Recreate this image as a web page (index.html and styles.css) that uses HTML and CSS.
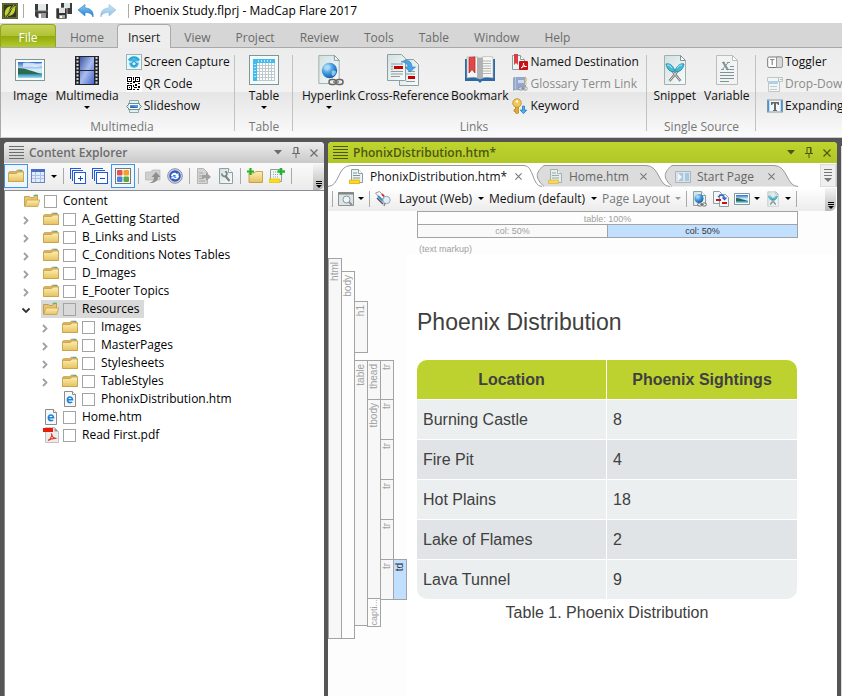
FILE: index.html
```html
<!DOCTYPE html>
<html lang="en">
<head>
<meta charset="utf-8">
<title>Phoenix Study.flprj - MadCap Flare 2017</title>
<link rel="stylesheet" href="styles.css">
</head>
<body>
<svg class="defs" aria-hidden="true">
  <defs>
    <linearGradient id="gFolder" x1="0" y1="0" x2="0" y2="1"><stop offset="0" stop-color="#fdeeb4"/><stop offset="1" stop-color="#e6c25f"/></linearGradient>
    <linearGradient id="gPage" x1="0" y1="0" x2="1" y2="1"><stop offset="0" stop-color="#d3e0e0"/><stop offset="1" stop-color="#fafcfc"/></linearGradient>
    <linearGradient id="gSky" x1="0" y1="0" x2="0" y2="1"><stop offset="0" stop-color="#2b6fd0"/><stop offset=".5" stop-color="#d9f0fa"/><stop offset=".7" stop-color="#bfe6f4"/><stop offset=".75" stop-color="#2a8aac"/><stop offset="1" stop-color="#9fdcf0"/></linearGradient>
    <linearGradient id="gFilm" x1="0" y1="0" x2="1" y2="1"><stop offset="0" stop-color="#3b56a0"/><stop offset=".5" stop-color="#a9bdf0"/><stop offset="1" stop-color="#4a66c8"/></linearGradient>
    <linearGradient id="gBlue" x1="0" y1="0" x2="0" y2="1"><stop offset="0" stop-color="#8fd0f8"/><stop offset="1" stop-color="#1f78c8"/></linearGradient>
    <radialGradient id="gGlobe" cx=".35" cy=".3" r=".8"><stop offset="0" stop-color="#c4e8ff"/><stop offset=".5" stop-color="#3f97dc"/><stop offset="1" stop-color="#0d4f9c"/></radialGradient>
  </defs>
  <symbol id="logo" viewBox="0 0 16 16"><rect width="16" height="16" fill="#33352b"/><rect x="1" y="1" width="14" height="14" fill="none" stroke="#84912b"/><path d="M3 13C2 8 4 4 9 3L5.500 11zM13 3c1 5-1 9-6 10l3.500-8z" fill="#c3d32f"/><path d="M3 14L12 2M5 14L14 3" stroke="#c3d32f" stroke-width=".8"/></symbol>
  <symbol id="save" viewBox="0 0 16 16"><path d="M1 1h13v14H3l-2-2z" fill="#3c3c3c"/><path d="M4 1h8v7H4z" fill="#e4e9ea"/><path d="M4 10h8v5H4z" fill="#9c9c9c"/><path d="M5 11h2v4H5z" fill="#fff"/><path d="M1 8h13" stroke="#777"/></symbol>
  <symbol id="saveall" viewBox="0 0 16 16"><path d="M5 0h11v11H5z" fill="#3c3c3c"/><path d="M8 0h6v5H8z" fill="#dfe4e5"/><path d="M0 5h11v11H1l-1-1z" fill="#333" stroke="#fff" stroke-width=".6"/><path d="M3 5h6v5H3z" fill="#dfe4e5"/><path d="M3 12h6v3H3z" fill="#aaa"/><path d="M4 13h2v2H4z" fill="#fff"/></symbol>
  <symbol id="undo" viewBox="0 0 16 16"><path d="M0 7L7 1.500v3.500c6 0 9 4 8 9-1-3-3-4.500-8-4.500V13z" fill="url(#gBlue)" stroke="#2a7fc4" stroke-width=".6"/></symbol>
  <symbol id="film" viewBox="0 0 32 32"><rect x="4" y="2" width="24" height="29" fill="#20242c"/><path d="M9 3h14v13H9zM9 17h14v13H9z" fill="url(#gFilm)"/><path d="M6.500 3v27M25.500 3v27" stroke="#d8d8d8" stroke-width="2" stroke-dasharray="2 1.500"/></symbol>
  <symbol id="photo" viewBox="0 0 32 32"><rect x="1.500" y="5.500" width="29" height="21" fill="#fbfdfd" stroke="#7d9696"/><rect x="4" y="8" width="24" height="16" fill="url(#gSky)"/><path d="M4 14c7 0 13 3 24 6H4z" fill="#2d6b50"/><path d="M9 9c6-2 14 2 19 0v3c-7 2-10 0-19 1z" fill="#fff" opacity=".7"/></symbol>
  <symbol id="capture" viewBox="0 0 16 16"><rect x=".5" y=".5" width="15" height="15" fill="#e9f7fb" stroke="#9ab5ba"/><path d="M3 6.500a5.500 5.500 0 0 1 10 0" fill="none" stroke="#25a5d8" stroke-width="2.200"/><circle cx="8" cy="9" r="4.800" fill="#39b7e5"/><path d="M3 8h10" stroke="#fff"/><circle cx="8" cy="9.800" r="2.200" fill="#d7f2fb" stroke="#1783b5"/></symbol>
  <symbol id="qr" viewBox="0 0 16 16" shape-rendering="crispEdges"><rect width="16" height="16" fill="#fff"/><path d="M1.500 1.500h4v4h-4zM9.500 1.500h4v4h-4zM1.500 9.500h4v4h-4z" fill="none" stroke="#000"/><path d="M3 3h1v1H3zM11 3h1v1h-1zM3 11h1v1H3zM7 1h1v3H7zM7 5h2v2H7zM1 7h2v1H1zM4 7h2v1H4zM9 8h2v2H9zM12 7h2v1h-2zM7 9h1v2H7zM8 11h3v1H8zM12 10h2v2h-2zM7 13h2v1H7zM11 13h2v1h-2z" fill="#000"/></symbol>
  <symbol id="slides" viewBox="0 0 16 16"><path d="M3.500 2.500h9v3h-9zM3.500 11.500h9v3h-9z" fill="#e4efef" stroke="#8fa7a7"/><path d="M2.500 5.500h11v6h-11z" fill="#f7fbfb" stroke="#748c8c"/><path d="M4 7h8v3H4z" fill="#4d9ae0"/><path d="M4 9c3-1 5 0 8 1H4z" fill="#2c62a8"/><path d="M3 6L.500 8.500 3 11M13 6l2.500 2.500L13 11" fill="#cfe5f2" stroke="#748c8c"/></symbol>
  <symbol id="grid" viewBox="0 0 32 32" shape-rendering="crispEdges"><rect x="1.500" y="1.500" width="29" height="29" fill="#f6f9f9" stroke="#7f9797"/><path d="M5 5h22v22H5z" fill="#fff"/><path d="M8 11.500h19M8 14.500h19M8 17.500h19M8 20.500h19M8 23.500h19M8 26.500h19M11.500 8v19M14.500 8v19M17.500 8v19M20.500 8v19M23.500 8v19M26.500 8v19" stroke="#bccace"/><path d="M5 5h22v4H5zM5 5h4v22H5z" fill="#3fbcf0"/><path d="M10 6h1v2h-1zM13 6h1v2h-1zM16 6h1v2h-1zM19 6h1v2h-1zM22 6h1v2h-1zM6 10h2v1H6zM6 13h2v1H6zM6 16h2v1H6zM6 19h2v1H6zM6 22h2v1H6z" fill="#b8e8fc"/></symbol>
  <symbol id="page" viewBox="0 0 24 32"><path d="M1.500 1.500h16l5 5v24h-21z" fill="url(#gPage)" stroke="#9fb1b1"/><path d="M17.500 1.500v5h5z" fill="#fff" stroke="#7f9494"/></symbol>
  <symbol id="chain" viewBox="0 0 16 8"><rect x="1" y="1.500" width="7" height="5" rx="2.500" fill="#eee" stroke="#666" stroke-width="1.500"/><rect x="8" y="1.500" width="7" height="5" rx="2.500" fill="#eee" stroke="#666" stroke-width="1.500"/><path d="M5 4h6" stroke="#777" stroke-width="1.500"/></symbol>
  <symbol id="hyperlink" viewBox="0 0 32 32"><use href="#page" x="4" y="0" width="24" height="31"/><circle cx="16.500" cy="16.500" r="7.700" fill="url(#gGlobe)"/><path d="M11 13c2-3 5-2 6-1s0 3-2 4-4-1-4-3zM19 17c2-1 4 0 4 1s-2 4-3 4-2-3-1-5z" fill="#a6daf8" opacity=".8"/><use href="#chain" x="15" y="24" width="16" height="8"/></symbol>
  <symbol id="linksmall" viewBox="0 0 16 16"><path d="M1.500.500h8l4 4v10h-12z" fill="url(#gPage)" stroke="#8ba0a0"/><path d="M9.500.500v4h4" fill="#fff" stroke="#8ba0a0"/><circle cx="7" cy="7.500" r="4.500" fill="url(#gGlobe)"/><use href="#chain" x="5" y="11" width="10" height="5"/></symbol>
  <symbol id="xref" viewBox="0 0 32 32"><path d="M12.500 5.500h14l5 5v21h-19z" fill="url(#gPage)" stroke="#8ba0a0"/><path d="M.500.500h14l4 4v22H.500z" fill="url(#gPage)" stroke="#8ba0a0"/><path d="M4 10h12M4 12.500h2M4 15h2M4 17.500h12M4 20h12M4 22.500h9M19 20h9M19 27.500h9M21 17.500h7" stroke="#8d9c9c"/><path d="M7 12h9v3H7zM21 22h7v3h-7z" fill="#c40000"/><path d="M14 8c7-4 11 0 11 5h3.500L23 18l-5-5h3c0-3-3-5-7-5z" fill="#48a4e6" stroke="#2b7fc2" stroke-width=".6"/></symbol>
  <symbol id="xrefsmall" viewBox="0 0 16 16"><path d="M.500.500h6l3 3v9h-9z" fill="#f4f8f8" stroke="#8ba0a0"/><path d="M6.500 3.500h6l3 3v9h-9z" fill="#f4f8f8" stroke="#8ba0a0"/><path d="M3 8h5v2H3zM9 11h5v2H9z" fill="#d01010"/><path d="M5 6c3-3 6-2 6.500 1M9.500 6.500l2 2 2-2" fill="none" stroke="#2b5fd0" stroke-width="1.300"/></symbol>
  <symbol id="book" viewBox="0 0 32 32"><path d="M1 5h30v22H18l-2 2-2-2H1z" fill="#2c6aa5"/><path d="M3 3c5-1 9-1 13 1v21c-4-2-8-2-13-1zM29 3c-5-1-9-1-13 1v21c4-2 8-2 13-1z" fill="#f5f5f3" stroke="#aaa" stroke-width=".6"/><path d="M13 3.500l3 .5v21l-3-1zM16 4l3-.500V24l-3 1z" fill="#aeb2b2"/><path d="M19 7h8M19 9.500h8M19 12h8M19 14.500h8M19 17h8M19 19.500h8" stroke="#b7b7b7"/><path d="M5 3.500l6-.5v16l-3-3.500L5 19z" fill="#e04848" stroke="#b82424" stroke-width=".7"/></symbol>
  <symbol id="named" viewBox="0 0 16 16"><path d="M.500 1.500h8l4 4v10H.500z" fill="#eff4f4" stroke="#8ba0a0"/><path d="M8.500 1.500v4h4" fill="#fff" stroke="#8ba0a0"/><path d="M2 0h4v11L4 9l-2 2z" fill="#dc3e46"/><rect x="7" y="7" width="9" height="9" rx="1" fill="#c91016"/><path d="M9 14c2-1 2.500-3 2.500-5 0 3 1 3.500 3 3.500-2 0-4 0-5.500 1.500z" fill="none" stroke="#fff"/></symbol>
  <symbol id="glossary" viewBox="0 0 16 16"><path d="M2 1h12v13H3l-2 1V2z" fill="#7f97c4"/><path d="M3 1h1v12H3z" fill="#a9badb"/><path d="M6 4h6v3H6z" fill="#c9d5ec"/><path d="M13 2h2v3h-2z" fill="#e9b56b"/><path d="M13 6h2v3h-2z" fill="#e6d67a"/><path d="M3 14h12v1H3z" fill="#dde3ec"/><use href="#chain" x="6" y="10" width="10" height="5" opacity=".7"/></symbol>
  <symbol id="key" viewBox="0 0 16 16"><path d="M3.500 8h3v7l-1.500 1-1.500-1v-1.500H2v-2h1.500z" fill="#e0ab30" stroke="#a97a18" stroke-width=".6"/><circle cx="5" cy="5" r="4.300" fill="#f2c754" stroke="#b58420" stroke-width=".7"/><circle cx="5" cy="3.500" r="1.200" fill="#fff"/><path d="M10.500 8h2v4h2.300L11.500 15.700 8.200 12h2.300z" fill="#54adec" stroke="#1973be" stroke-width=".7"/></symbol>
  <symbol id="snippet" viewBox="0 0 24 32"><use href="#page" width="24" height="32"/><path d="M6.500 27L17 14M17.500 27L7 14" stroke="#777" stroke-width="2.500"/><path d="M6.500 27L17 14M17.500 27L7 14" stroke="#d5d5d5"/><path d="M3 10c3-1 7 1 9 7-5 2-8-2-9-7zM21 10c-3-1-7 1-9 7 5 2 8-2 9-7z" fill="#45bcd7" stroke="#1d86a4" stroke-width=".8"/><path d="M4 11c2 0 4 1 5 3M19 11c-2 0-4 1-5 3" stroke="#b6eaf5" fill="none"/></symbol>
  <symbol id="variable" viewBox="0 0 24 32"><path d="M1.500 1.500h16l5 5v24h-21z" fill="#f3f3f3" stroke="#b8bebe"/><path d="M17.500 1.500v5h5z" fill="#fff" stroke="#b8bebe"/><path d="M7 8.500h3M12 8.500h3M6 15.500h3M11 15.500h4" stroke="#8aa0a0"/><path d="M8 8l5 8" stroke="#7c9494" stroke-width="2"/><path d="M13.500 8L7 16" stroke="#7c9494"/><path d="M15 12.500h4M15 15.500h4M5 18.500h14M5 21.500h14M5 24.500h14M5 27.500h9" stroke="#7c9494" stroke-width="1.200"/></symbol>
  <symbol id="toggler" viewBox="0 0 16 16"><rect x=".7" y="3" width="14.600" height="10.500" rx="1.500" fill="#fff" stroke="#777"/><path d="M9.500 3h4q2 0 2 1.500v7.500q0 1.500-2 1.500h-4z" fill="#d9d9d9" stroke="#999"/><path d="M3 5.500h4.500M5.200 5.500V11" stroke="#888" stroke-width="1.200"/></symbol>
  <symbol id="dropdown" viewBox="0 0 16 16"><path d="M.500 1.500h15v4h-15zM1.500 5.500h11v10h-11z" fill="#f4f7f7" stroke="#b3bfc0"/><path d="M2 5h9v3H2z" fill="#a2c9ec"/><path d="M3 10.500h7M3 13.500h7" stroke="#b9c3c4"/><path d="M11.500 2v3M13 3l1 1 1-1" stroke="#a5b2b2" fill="none"/></symbol>
  <symbol id="expand" viewBox="0 0 16 16"><rect x=".5" y="2" width="15" height="12" fill="#f2f6f8" stroke="#8a9b9d"/><path d="M1.500 2.500v11M14.500 2.500v11" stroke="#3f94dd" stroke-width="1.500"/><path d="M4 4h8v3h-1l-1-1.500H9V12h1v1H6v-1h1V5.500H6L5 7H4z" fill="#666"/></symbol>
  <symbol id="folder" viewBox="0 0 16 16"><path d="M.500 4.500l1-1h6l2-1.500h4.500l1.500 2v9.500H.500z" fill="#d8b35a" stroke="#bb9440" stroke-width=".6"/><path d="M.500 5.500h8l1.500-1.500h5.500v9.500H.500z" fill="url(#gFolder)" stroke="#c49f4c" stroke-width=".8"/><path d="M11 2.500h3" stroke="#3fb0d5"/></symbol>
  <symbol id="open" viewBox="0 0 16 16"><path d="M.500 13V3.500h5l1 1h3L11 2h2.500v6" fill="#e8c671" stroke="#b8923f" stroke-width=".8"/><path d="M9.500 2.500h4" stroke="#4bc26e" stroke-width="1.200"/><path d="M3 7h12.700l-2 6.500H.700z" fill="url(#gFolder)" stroke="#c49f4c" stroke-width=".8"/></symbol>
  <symbol id="html" viewBox="0 0 16 16"><path d="M2.500.500h8l3 3v12h-11z" fill="#f7f7f7" stroke="#8b8b8b"/><path d="M10.500.500v3h3" fill="#fff" stroke="#8b8b8b"/><path d="M5.500 8.800h5C10.300 6.700 9.300 6 8 6 6.500 6 5.400 7.200 5.400 8.800S6.500 11.600 8.200 11.600c.8 0 1.500-.2 2-.6" fill="none" stroke="#1b84d8" stroke-width="1.600"/></symbol>
  <symbol id="pdf" viewBox="0 0 16 16"><path d="M2.500.500h9l4 4v11h-13z" fill="#ececec" stroke="#c2c2c2"/><path d="M11.500.500v4h4" fill="#999"/><path d="M0 1h10v4H0z" fill="#e61b09"/><path d="M5 13.500c3-2 4-5 3.500-7 .5 3 2 5 5 5-3-.5-6 .5-8.500 2z" fill="none" stroke="#e63a2c" stroke-width="1.200"/></symbol>
  <symbol id="sheet" viewBox="0 0 16 16" shape-rendering="crispEdges"><path d="M1.500 1.500h13v13h-13z" fill="#e3ecfb" stroke="#6d83b8"/><path d="M1 1h14v3H1z" fill="#4a6bc8"/><path d="M5.500 4v10M10.500 4v10M2 7.500h12M2 10.500h12" stroke="#a9c0ee"/></symbol>
  <symbol id="plusbox" viewBox="0 0 16 16" shape-rendering="crispEdges"><path d="M.500 10.500v-10h10M2.500 12.500v-10h10" fill="none" stroke="#2358d8"/><path d="M4.500 4.500h11v11h-11z" fill="#fff" stroke="#2358d8"/><path d="M7.500 10.500h5M10.500 7.500v5" stroke="#174ac0"/></symbol>
  <symbol id="minusbox" viewBox="0 0 16 16" shape-rendering="crispEdges"><path d="M.500 10.500v-10h10M2.500 12.500v-10h10" fill="none" stroke="#2358d8"/><path d="M4.500 4.500h11v11h-11z" fill="#fff" stroke="#2358d8"/><path d="M7.500 10.500h5" stroke="#174ac0"/></symbol>
  <symbol id="tiles" viewBox="0 0 16 16"><rect x=".5" y=".5" width="15" height="15" fill="#fbfbfb" stroke="#777"/><rect x="2" y="2" width="5.500" height="5.500" rx="1" fill="#e0564f"/><rect x="8.500" y="2" width="5.500" height="5.500" rx="1" fill="#f2a028"/><rect x="2" y="8.500" width="5.500" height="5.500" rx="1" fill="#4a83d8"/><rect x="8.500" y="8.500" width="5.500" height="5.500" rx="1" fill="#58a843"/></symbol>
  <symbol id="checkin" viewBox="0 0 16 16"><path d="M.500 4h5l2-2h7.500v10H.500z" fill="#cfcfcf" stroke="#b5b5b5" stroke-width=".7"/><path d="M4 15c4-1 5-3 5-6H6.500L11 4l4.500 5H13c0 4-3 6-9 6z" fill="#8f8f8f"/></symbol>
  <symbol id="refresh" viewBox="0 0 16 16"><circle cx="8" cy="8" r="7.300" fill="#d6d6dc" stroke="#8f8f99"/><circle cx="8" cy="8" r="5.800" fill="#2d5dd0"/><path d="M4 8c0-3 4-4.500 6-2l1.500-1v4H8l1-1.200C7.500 6.500 6 7 6 8zM12 8c0 3-4 4.500-6 2l-1.500 1.500V8.500H8L7 9.500c1 .8 3 .3 3-1.500z" fill="#fff"/></symbol>
  <symbol id="pending" viewBox="0 0 16 16"><path d="M1.500.500h6l4 4v11h-10z" fill="#d4d4d4" stroke="#b5b5b5"/><path d="M3 5h4M3 8h6M3 10.500h5M3 13h6" stroke="#a5a5a5"/><path d="M6 7h4V4l5 5-5 4v-3H6z" fill="#a0a0a0"/></symbol>
  <symbol id="wrench" viewBox="0 0 16 16"><path d="M1.500.500h9l4 4v11h-13z" fill="url(#gPage)" stroke="#8ba0a0"/><path d="M10.500.500v4h4" fill="#fff" stroke="#8ba0a0"/><path d="M7 7.500l4.500 5.500" stroke="#808080" stroke-width="2.200"/><path d="M4 5.500a2.500 2.500 0 1 0 3-2" fill="none" stroke="#808080" stroke-width="1.600"/></symbol>
  <symbol id="newfolder" viewBox="0 0 16 16"><path d="M2 5h5l2-1.500h6.500v11H2z" fill="url(#gFolder)" stroke="#bb9440" stroke-width=".8"/><path d="M3.500 0v7M0 3.500h7" stroke="#24b324" stroke-width="2.200"/></symbol>
  <symbol id="newtopic" viewBox="0 0 16 16"><path d="M1.500 1.500h11v12h-11z" fill="#f0f5f5" stroke="#8ba0a0"/><path d="M4 4h5M4 6.500h6M4 9h6" stroke="#93a5a5" stroke-dasharray="1 1"/><path d="M0 11h11v3.500H0z" fill="#ffdc14" stroke="#e1b300" stroke-width=".6"/><path d="M12 0v7M8.500 3.500H16" stroke="#24b334" stroke-width="2.600"/></symbol>
  <symbol id="topic" viewBox="0 0 16 16"><path d="M3.500.500h7l4 4v9h-11z" fill="#edf3f3" stroke="#8ba0a0"/><path d="M10.500.500v4h4" fill="#fff" stroke="#8ba0a0"/><path d="M5 4h4M5 6.500h7M5 9h7" stroke="#7d9898"/><path d="M1.500 11h10v3.500h-10z" fill="#ffd91f" stroke="#dbac10" stroke-width=".8"/></symbol>
  <symbol id="start" viewBox="0 0 16 12"><path d="M.500.500h15v11H.500z" fill="#dbe6ed" stroke="#93a7b5"/><path d="M3 2h5v8H3zM10 2h4v8h-4z" fill="#90c2e4"/><path d="M3 2l4 4-4 4z" fill="#fff"/></symbol>
  <symbol id="preview" viewBox="0 0 16 14"><path d="M.500.500h15v13H.500z" fill="#dfe3e4" stroke="#8a9292"/><path d="M0 1.500h16" stroke="#7d8787" stroke-width="2"/><circle cx="8.500" cy="7.500" r="3.500" fill="#edf6fb" stroke="#87989f"/><path d="M11 10l3 3" stroke="#87989f" stroke-width="2"/></symbol>
  <symbol id="style" viewBox="0 0 16 16"><path d="M.500 2l4-1.500 5 5-3 3.500z" fill="#f7f7f7" stroke="#999"/><path d="M2 7l6 6" stroke="#555" stroke-width="1.500"/><path d="M3 5l5 5" stroke="#3a8ad6" stroke-width="2"/><path d="M7 3l2 2.500" stroke="#d42a2a" stroke-width="2"/><circle cx="11.500" cy="9" r="3.700" fill="#dceef7" stroke="#9aa6ab"/><path d="M10 12l-1 3" stroke="#888" stroke-width="1.500"/></symbol>
  <symbol id="picture" viewBox="0 0 16 12"><path d="M.500.500h15v11H.500z" fill="#fff" stroke="#7e9797"/><path d="M2 2h12v8H2z" fill="url(#gSky)"/><path d="M2 5c4 0 8 2 12 3H2z" fill="#2d6b50"/></symbol>
  <symbol id="caret" viewBox="0 0 6 3"><path d="M0 0h6L3 3z"/></symbol>
  <symbol id="downtri" viewBox="0 0 8 5"><path d="M0 0h8L4 4.500z"/></symbol>
  <symbol id="pin" viewBox="0 0 8 11"><path d="M2 .500h4v6H2zM0 6.500h8M4 7v4" fill="none" stroke="currentColor"/><path d="M5.500 1v5" stroke="currentColor"/></symbol>
  <symbol id="close" viewBox="0 0 8 8"><path d="M.500.500l7 7M7.500.500l-7 7" stroke="currentColor" stroke-width="1.200"/></symbol>
  <symbol id="grip" viewBox="0 0 15 14" shape-rendering="crispEdges"><path d="M0 .500h15M0 3.500h15M0 6.500h15M0 9.500h15M0 12.500h15" stroke="currentColor"/></symbol>
  <symbol id="chev" viewBox="0 0 6 9"><path d="M1 1l3.500 3.500L1 8" fill="none" stroke="currentColor" stroke-width="1.800"/></symbol>
  <symbol id="more" viewBox="0 0 6 8"><path d="M0 .500h6M0 2.500h6" stroke="currentColor"/><path d="M0 4h6L3 7z"/></symbol>
</svg>

<header class="titlebar">
  <svg class="i16"><use href="#logo"/></svg>
  <i class="bar"></i>
  <div class="quick">
    <button aria-label="Save"><svg class="i16"><use href="#save"/></svg></button>
    <button aria-label="Save All"><svg class="i16"><use href="#saveall"/></svg></button>
    <button aria-label="Undo"><svg class="i16"><use href="#undo"/></svg></button>
    <button class="faded flip" aria-label="Redo"><svg class="i16"><use href="#undo"/></svg></button>
  </div>
  <i class="bar"></i>
  <span>Phoenix Study.flprj - MadCap Flare 2017</span>
</header>

<nav class="menu">
  <button class="file">File</button>
  <button>Home</button>
  <button class="current">Insert</button>
  <button>View</button>
  <button>Project</button>
  <button>Review</button>
  <button>Tools</button>
  <button>Table</button>
  <button>Window</button>
  <button>Help</button>
</nav>

<section class="ribbon">
  <div class="group g-media">
    <div class="tools">
      <button class="big"><svg class="i32"><use href="#photo"/></svg>Image</button>
      <button class="big"><svg class="i32"><use href="#film"/></svg>Multimedia<svg class="caret"><use href="#caret"/></svg></button>
      <div class="stack">
        <button><svg class="i16"><use href="#capture"/></svg>Screen Capture</button>
        <button><svg class="i16"><use href="#qr"/></svg>QR Code</button>
        <button><svg class="i16"><use href="#slides"/></svg>Slideshow</button>
      </div>
    </div>
    <h2>Multimedia</h2>
  </div>
  <div class="group g-table">
    <div class="tools">
      <button class="big"><svg class="i32"><use href="#grid"/></svg>Table<svg class="caret"><use href="#caret"/></svg></button>
    </div>
    <h2>Table</h2>
  </div>
  <div class="group g-links">
    <div class="tools">
      <button class="big"><svg class="i32"><use href="#hyperlink"/></svg>Hyperlink<svg class="caret"><use href="#caret"/></svg></button>
      <button class="big"><svg class="i32"><use href="#xref"/></svg>Cross-Reference</button>
      <button class="big"><svg class="i32"><use href="#book"/></svg>Bookmark</button>
      <div class="stack">
        <button><svg class="i16"><use href="#named"/></svg>Named Destination</button>
        <button class="off"><svg class="i16"><use href="#glossary"/></svg>Glossary Term Link</button>
        <button><svg class="i16"><use href="#key"/></svg>Keyword</button>
      </div>
    </div>
    <h2>Links</h2>
  </div>
  <div class="group g-source">
    <div class="tools">
      <button class="big"><svg class="i32"><use href="#snippet"/></svg>Snippet</button>
      <button class="big"><svg class="i32"><use href="#variable"/></svg>Variable</button>
    </div>
    <h2>Single Source</h2>
  </div>
  <div class="group g-text">
    <div class="tools">
      <div class="stack">
        <button><svg class="i16"><use href="#toggler"/></svg>Toggler</button>
        <button class="off"><svg class="i16"><use href="#dropdown"/></svg>Drop-Down</button>
        <button><svg class="i16"><use href="#expand"/></svg>Expanding</button>
      </div>
    </div>
  </div>
</section>

<main class="workspace">
  <aside class="pane explorer">
    <header class="panehead">
      <svg class="grip"><use href="#grip"/></svg>
      <h1>Content Explorer</h1>
      <button aria-label="Window menu"><svg class="tri"><use href="#downtri"/></svg></button>
      <button aria-label="Auto hide"><svg class="pin"><use href="#pin"/></svg></button>
      <button aria-label="Close"><svg class="x"><use href="#close"/></svg></button>
    </header>
    <div class="toolbar">
      <button class="pressed" aria-label="Show folders"><svg class="i16"><use href="#folder"/></svg></button>
      <button class="drop" aria-label="View"><svg class="i16"><use href="#sheet"/></svg><svg class="caret"><use href="#caret"/></svg></button>
      <i class="bar"></i>
      <button aria-label="Expand all"><svg class="i16"><use href="#plusbox"/></svg></button>
      <button aria-label="Collapse all"><svg class="i16"><use href="#minusbox"/></svg></button>
      <button class="pressed" aria-label="Show files"><svg class="i16"><use href="#tiles"/></svg></button>
      <i class="bar"></i>
      <button aria-label="Check in"><svg class="i16"><use href="#checkin"/></svg></button>
      <button aria-label="Refresh"><svg class="i16"><use href="#refresh"/></svg></button>
      <i class="bar"></i>
      <button aria-label="Open"><svg class="i16"><use href="#pending"/></svg></button>
      <button aria-label="Properties"><svg class="i16"><use href="#wrench"/></svg></button>
      <i class="bar"></i>
      <button aria-label="New folder"><svg class="i16"><use href="#newfolder"/></svg></button>
      <button aria-label="New topic"><svg class="i16"><use href="#newtopic"/></svg></button>
      <i class="bar"></i>
      <button class="overflow" aria-label="More"><svg class="more"><use href="#more"/></svg></button>
    </div>
    <ul class="tree">
      <li><div class="row"><i class="tw"></i><label><svg class="i16"><use href="#open"/></svg><input type="checkbox"><span>Content</span></label></div>
        <ul>
          <li><div class="row"><svg class="tw"><use href="#chev"/></svg><label><svg class="i16"><use href="#folder"/></svg><input type="checkbox"><span>A_Getting Started</span></label></div></li>
          <li><div class="row"><svg class="tw"><use href="#chev"/></svg><label><svg class="i16"><use href="#folder"/></svg><input type="checkbox"><span>B_Links and Lists</span></label></div></li>
          <li><div class="row"><svg class="tw"><use href="#chev"/></svg><label><svg class="i16"><use href="#folder"/></svg><input type="checkbox"><span>C_Conditions Notes Tables</span></label></div></li>
          <li><div class="row"><svg class="tw"><use href="#chev"/></svg><label><svg class="i16"><use href="#folder"/></svg><input type="checkbox"><span>D_Images</span></label></div></li>
          <li><div class="row"><svg class="tw"><use href="#chev"/></svg><label><svg class="i16"><use href="#folder"/></svg><input type="checkbox"><span>E_Footer Topics</span></label></div></li>
          <li><div class="row selected"><svg class="tw expanded"><use href="#chev"/></svg><label><svg class="i16"><use href="#open"/></svg><input type="checkbox"><span>Resources</span></label></div>
            <ul>
              <li><div class="row"><svg class="tw"><use href="#chev"/></svg><label><svg class="i16"><use href="#folder"/></svg><input type="checkbox"><span>Images</span></label></div></li>
              <li><div class="row"><svg class="tw"><use href="#chev"/></svg><label><svg class="i16"><use href="#folder"/></svg><input type="checkbox"><span>MasterPages</span></label></div></li>
              <li><div class="row"><svg class="tw"><use href="#chev"/></svg><label><svg class="i16"><use href="#folder"/></svg><input type="checkbox"><span>Stylesheets</span></label></div></li>
              <li><div class="row"><svg class="tw"><use href="#chev"/></svg><label><svg class="i16"><use href="#folder"/></svg><input type="checkbox"><span>TableStyles</span></label></div></li>
              <li><div class="row"><i class="tw"></i><label><svg class="i16"><use href="#html"/></svg><input type="checkbox"><span>PhonixDistribution.htm</span></label></div></li>
            </ul>
          </li>
          <li><div class="row"><i class="tw"></i><label><svg class="i16"><use href="#html"/></svg><input type="checkbox"><span>Home.htm</span></label></div></li>
          <li><div class="row"><i class="tw"></i><label><svg class="i16"><use href="#pdf"/></svg><input type="checkbox"><span>Read First.pdf</span></label></div></li>
        </ul>
      </li>
    </ul>
  </aside>

  <section class="pane editor">
    <header class="panehead green">
      <svg class="grip"><use href="#grip"/></svg>
      <h1>PhonixDistribution.htm*</h1>
      <button aria-label="Window menu"><svg class="tri"><use href="#downtri"/></svg></button>
      <button aria-label="Auto hide"><svg class="pin"><use href="#pin"/></svg></button>
      <button aria-label="Close"><svg class="x"><use href="#close"/></svg></button>
    </header>
    <div class="doctabs">
      <button class="doctab active">
        <svg class="shape" viewBox="0 0 214 23" preserveAspectRatio="none"><path d="M0 22.500C12 22 9 1.500 23 1.500H196C206 1.500 204 22.500 214 22.500"/></svg>
        <svg class="i16"><use href="#topic"/></svg><span>PhonixDistribution.htm*</span><svg class="x"><use href="#close"/></svg>
      </button>
      <button class="doctab">
        <svg class="shape" viewBox="0 0 134 23" preserveAspectRatio="none"><path d="M8 22.500C-1 14 -1 9 8 1.500H110C124 1.500 122 22.500 134 22.500"/></svg>
        <svg class="i16"><use href="#topic"/></svg><span>Home.htm</span><svg class="x"><use href="#close"/></svg>
      </button>
      <button class="doctab">
        <svg class="shape" viewBox="0 0 134 23" preserveAspectRatio="none"><path d="M8 22.500C-1 14 -1 9 8 1.500H110C124 1.500 122 22.500 134 22.500"/></svg>
        <svg class="i16"><use href="#start"/></svg><span>Start Page</span><svg class="x"><use href="#close"/></svg>
      </button>
      <button class="tablist" aria-label="Tab list"><svg viewBox="0 0 8 13"><path d="M0 .500h8M0 3.500h8M0 6.500h8" stroke="#777"/><path d="M0 9h8l-4 4z" fill="#777"/></svg></button>
    </div>
    <div class="toolbar">
      <i class="bar"></i>
      <button class="drop" aria-label="Preview"><svg class="i16"><use href="#preview"/></svg><svg class="caret"><use href="#caret"/></svg></button>
      <i class="bar"></i>
      <button aria-label="Style options"><svg class="i16"><use href="#style"/></svg></button>
      <div class="pick w-layout"><select aria-label="Layout"><option>Layout (Web)</option></select><svg class="caret"><use href="#caret"/></svg></div>
      <div class="pick w-medium"><select aria-label="Medium"><option>Medium (default)</option></select><svg class="caret"><use href="#caret"/></svg></div>
      <div class="pick w-page"><select aria-label="Page layout" disabled><option>Page Layout</option></select><svg class="caret"><use href="#caret"/></svg></div>
      <i class="bar"></i>
      <button aria-label="Insert hyperlink"><svg class="i16"><use href="#linksmall"/></svg></button>
      <button aria-label="Insert cross-reference"><svg class="i16"><use href="#xrefsmall"/></svg></button>
      <button class="drop" aria-label="Insert image"><svg class="i16"><use href="#picture"/></svg><svg class="caret"><use href="#caret"/></svg></button>
      <button class="drop" aria-label="Insert snippet"><svg class="i16"><use href="#snippet"/></svg><svg class="caret"><use href="#caret"/></svg></button>
      <i class="bar"></i>
      <button class="overflow" aria-label="More"><svg class="more"><use href="#more"/></svg></button>
    </div>
    <div class="canvas">
      <div class="columns">
        <div class="tablebar">table: 100%</div>
        <div class="colbars"><div>col: 50%</div><div class="sel">col: 50%</div></div>
        <p>(text markup)</p>
      </div>
      <div class="structure">
        <div class="node"><div class="tag"><span>html</span></div>
          <div class="kids k-html">
            <div class="node"><div class="tag light"><span>body</span></div>
              <div class="kids k-body">
                <div class="node n-h1"><div class="tag"><span>h1</span></div></div>
                <div class="node"><div class="tag"><span>table</span></div>
                  <div class="kids">
                    <div class="node"><div class="tag"><span>thead</span></div><div class="kids"><div class="node n-row"><div class="tag"><span>tr</span></div></div></div></div>
                    <div class="node"><div class="tag"><span>tbody</span></div>
                      <div class="kids">
                        <div class="node n-row"><div class="tag"><span>tr</span></div></div>
                        <div class="node n-row"><div class="tag"><span>tr</span></div></div>
                        <div class="node n-row"><div class="tag"><span>tr</span></div></div>
                        <div class="node n-row"><div class="tag"><span>tr</span></div></div>
                        <div class="node n-row"><div class="tag"><span>tr</span></div><div class="tag sel"><span>td</span></div></div>
                      </div>
                    </div>
                    <div class="node n-caption"><div class="tag light"><span>capti...</span></div></div>
                  </div>
                </div>
              </div>
            </div>
          </div>
        </div>
      </div>
      <article class="document">
        <h2>Phoenix Distribution</h2>
        <table>
          <caption>Table 1. Phoenix Distribution</caption>
          <thead><tr><th>Location</th><th>Phoenix Sightings</th></tr></thead>
          <tbody>
            <tr><td>Burning Castle</td><td>8</td></tr>
            <tr><td>Fire Pit</td><td>4</td></tr>
            <tr><td>Hot Plains</td><td>18</td></tr>
            <tr><td>Lake of Flames</td><td>2</td></tr>
            <tr><td>Lava Tunnel</td><td>9</td></tr>
          </tbody>
        </table>
      </article>
    </div>
  </section>
  <div class="edge"></div>
</main>
</body>
</html>
```
FILE: styles.css
```css
* { box-sizing: border-box; }

body {
  margin: 0;
  min-height: 100vh;
  display: flex;
  flex-direction: column;
  overflow-x: hidden;
  background: #555;
  color: #111;
  font: 12px/16px "Open Sans", "Noto Sans", sans-serif;
}

button, select, input { font: inherit; color: inherit; margin: 0; }
button { padding: 0; border: 0; background: none; white-space: nowrap; }
h1, h2, p, ul { margin: 0; padding: 0; font: inherit; }
svg { display: block; flex: none; }
.defs { position: absolute; width: 0; height: 0; }
.i16 { width: 16px; height: 16px; }
.i32 { width: 32px; height: 32px; }
.caret { width: 6px; height: 3px; }
.bar { flex: none; width: 1px; height: 14px; background: #aaa; }

/* Title bar */
.titlebar { display: flex; align-items: center; height: 23px; padding: 0 2px 2px; background: #fff; gap: 5px; color: #000; white-space: nowrap; }
.quick { display: flex; gap: 6px; margin: 0 7px 0 5px; }
.faded { opacity: .5; }
.flip { transform: scaleX(-1); }

/* Menu tabs */
.menu { display: flex; height: 25px; padding-top: 1px; background: #d6d6d6; border-bottom: 1px solid #a9a9a9; color: #6b6b6b; }
.menu button { padding: 4px 12px 0 13px; }
.menu .file { width: 56px; margin-right: 1px; border: 1px solid #93a51c; border-bottom: 0; border-radius: 4px 4px 0 0; background: linear-gradient(#c5d25c 0%, #b0c234 50%, #94aa10 52%, #b4cb2c 100%); color: #fff; padding: 3px 13px 0; }
.menu .current { height: 24px; padding: 3px 10px 0; margin-left: 1px; border: 1px solid #a9a9a9; border-bottom: 0; border-radius: 4px 4px 0 0; background: #eee; color: #222; }

/* Ribbon */
.ribbon { display: flex; height: 90px; overflow: hidden; background: linear-gradient(#ececec 0, #f2f2f2 44px, #e5e5e5 44px, #fbfbfb 100%); border-left: 1px solid #aaa; border-bottom: 1px solid #ccc; }
.group { flex: none; position: relative; display: flex; flex-direction: column; }
.group::after { content: ""; position: absolute; right: 0; top: 7px; bottom: 6px; width: 1px; background: #c2c2c2; }
.g-media { width: 234px; padding-left: 8px; }
.g-table { width: 58px; }
.g-links { width: 354px; padding-left: 8px; }
.g-source { width: 109px; }
.g-text { flex: 1 0 86px; padding-left: 8px; }
.g-text::after { display: none; }
.g-table .tools, .g-source .tools { justify-content: center; }
.tools { display: flex; height: 69px; }
.group h2 { text-align: center; color: #777; line-height: 20px; }
.big { display: flex; flex-direction: column; align-items: center; padding: 6px 4px 0; line-height: 20px; }
.g-links .big { padding: 6px 1px 0; }
.stack { display: flex; flex-direction: column; padding: 3px 0 0 3px; }
.stack button { display: flex; align-items: center; gap: 2px; height: 22px; }
.off { color: #8a8a8a; }
.off svg { opacity: .8; }

/* Workspace */
.workspace { flex: 1; display: flex; gap: 4px; padding: 4px 0 0 4px; }
.pane { display: flex; flex-direction: column; min-width: 0; }
.explorer { flex: 0 0 320px; background: #fff; border-radius: 4px 4px 0 0; }
.editor { flex: 1; background: #fdfdfd; border-radius: 4px 4px 0 0; }
.edge { flex: none; width: 1px; margin-top: 4px; background: #ddd; }

.panehead { display: flex; align-items: center; gap: 10px; height: 21px; padding: 0 6px 0 5px; border-radius: 4px 4px 0 0; background: linear-gradient(#ececec, #c9c9c9); color: #6c6c6c; }
.panehead h1 { flex: 1; margin-left: -5px; font-weight: 600; }
.panehead.green { background: linear-gradient(#bfd42d, #b1c726); color: #4d5613; }
.grip { width: 15px; height: 14px; }
.tri { width: 8px; height: 5px; fill: currentColor; }
.pin { width: 8px; height: 11px; }
.x { width: 8px; height: 8px; }

.toolbar { display: flex; align-items: center; gap: 6px; position: relative; }
.toolbar .bar { height: 16px; }
.explorer .toolbar { height: 28px; padding-bottom: 1px; background: linear-gradient(#fafafa, #ebebeb); border-bottom: 1px solid #888c94; }
.pressed { display: grid; place-items: center; width: 24px; height: 24px; margin: 0 -3px; border: 1px solid #3b95e8; background: #f0f6fc; }
.toolbar .pressed:first-child { margin: 0 -4px 0 0; }
.drop { display: flex; align-items: center; gap: 5px; }
.overflow { position: absolute; right: 0; top: 1px; bottom: 0; width: 11px; padding: 16px 3px 0; border-radius: 0 0 6px 0; background: linear-gradient(#f4f4f4, #b8b8b8); color: #000; }
.more { width: 6px; height: 8px; }

/* Tree */
.tree, .tree ul { list-style: none; }
.tree { padding: 1px 0 0 1px; border-left: 1px solid #888c94; flex: 1; color: #000; }
.tree ul { padding-left: 19px; }
.row { display: flex; align-items: center; height: 18px; }
.tw { flex: none; width: 6px; height: 9px; margin: 2px 9px 0 -2px; color: #a0a0a0; }
.tw.expanded { transform: rotate(90deg); color: #333; }
.row label { display: flex; align-items: center; height: 18px; padding: 0 4px 0 2px; margin-left: 3px; white-space: nowrap; }
.row input { appearance: none; width: 13px; height: 13px; margin: 0 6px 0 4px; border: 1px solid #a3a3a3; background: #fff; }
.selected label, .selected input { background: #d9d9d9; }

/* Document tabs */
.doctabs { display: flex; height: 24px; padding-top: 1px; background: #fff; border-right: 1px solid #ccc; }
.doctab { position: relative; display: flex; align-items: center; flex: 0 0 134px; margin-right: -6px; padding: 2px 23px 0 11px; color: #666; }
.doctab.active { flex-basis: 214px; padding: 2px 20px 0 20px; color: #111; z-index: 1; }
.doctab span { position: relative; margin-left: 6px; }
.doctab .i16, .doctab .x { position: relative; }
.doctab .x { margin-left: auto; width: 7px; height: 7px; color: #777; }
.doctab:not(.active) .i16 { opacity: .7; }
.shape { position: absolute; inset: 0; width: 100%; height: 100%; fill: #dcdcdc; stroke: #999; }
.active .shape { fill: #fff; }
.tablist { width: 16px; margin-left: auto; display: grid; place-items: center; background: #efefef; border: 1px solid #ddd; }
.tablist svg { width: 8px; height: 13px; }

.editor .toolbar { height: 24px; padding: 0 4px 1px; gap: 5px; margin-right: 1px; background: linear-gradient(#fff, #ececec); border-radius: 0 0 6px 0; }
.editor .drop { gap: 4px; }
.editor .overflow { padding-top: 13px; }
.pick { display: flex; align-items: center; justify-content: space-between; }
.pick select { flex: 1; min-width: 0; appearance: none; border: 0; padding: 0; background: none; opacity: 1; }
.w-layout { width: 85px; margin-left: 3px; }
.w-medium { width: 108px; }
.w-page { width: 79px; color: #777; fill: #999; }

/* Editing canvas */
.canvas { flex: 1; display: grid; grid-template: 44px 1fr / 79px 1fr; font-family: "Liberation Sans", Arial, sans-serif; }
.columns { grid-column: 2; padding: 0 39px 0 10px; font-size: 9px; line-height: 14px; color: #a0a0a0; }
.tablebar, .colbars { height: 14px; border: 1px solid #a3a3a3; text-align: center; }
.colbars { display: flex; margin-top: -1px; line-height: 12px; }
.colbars div { flex: 1; background: #f9f9f9; }
.colbars .sel { border-left: 1px solid #a3a3a3; }
.colbars .sel, .tag.sel { background: #c1dfff; color: #333; }
.columns p { padding: 4px 2px 0; }

.structure { padding-top: 3px; font-size: 10px; line-height: 12px; color: #a0a0a0; }
.node { display: flex; margin-bottom: -1px; }
.tag { flex: none; width: 14px; margin-right: -1px; padding-top: 3px; border: 1px solid #a3a3a3; background: #f7f7f7; }
.tag.light { background: #fdfdfd; }
.tag span { display: block; width: 12px; writing-mode: vertical-rl; transform: rotate(180deg); }
.k-html { padding: 13px 0 1px; }
.k-body { padding: 30px 0 14px; }
.n-h1 { height: 52px; margin-bottom: 7px; }
.n-row { height: 41px; }
.n-caption { height: 29px; font-size: 9px; }
.n-caption .tag { padding-top: 0; }

.document { padding: 52px 40px 0 10px; background: #fff; color: #404040; }
.document h2 { font-size: 23px; line-height: 30px; margin-bottom: 23px; }
.document table { width: 100%; border-collapse: separate; border-spacing: 0; table-layout: fixed; font-size: 16px; line-height: 19px; }
.document caption { caption-side: bottom; padding-top: 4px; }
th, td { height: 40px; padding: 0 6px; border-bottom: 1px solid #fff; }
th { background: #bed22f; }
td { background: #ebeff0; }
tbody tr:nth-child(even) td { background: #e0e4e6; }
th:first-child, td:first-child { border-right: 1px solid #fff; }
th:first-child { border-top-left-radius: 10px; }
th:last-child { border-top-right-radius: 10px; }
tbody tr:last-child td { height: 39px; border-bottom: 0; }
tbody tr:last-child td:first-child { border-bottom-left-radius: 10px; }
tbody tr:last-child td:last-child { border-bottom-right-radius: 10px; }
```
